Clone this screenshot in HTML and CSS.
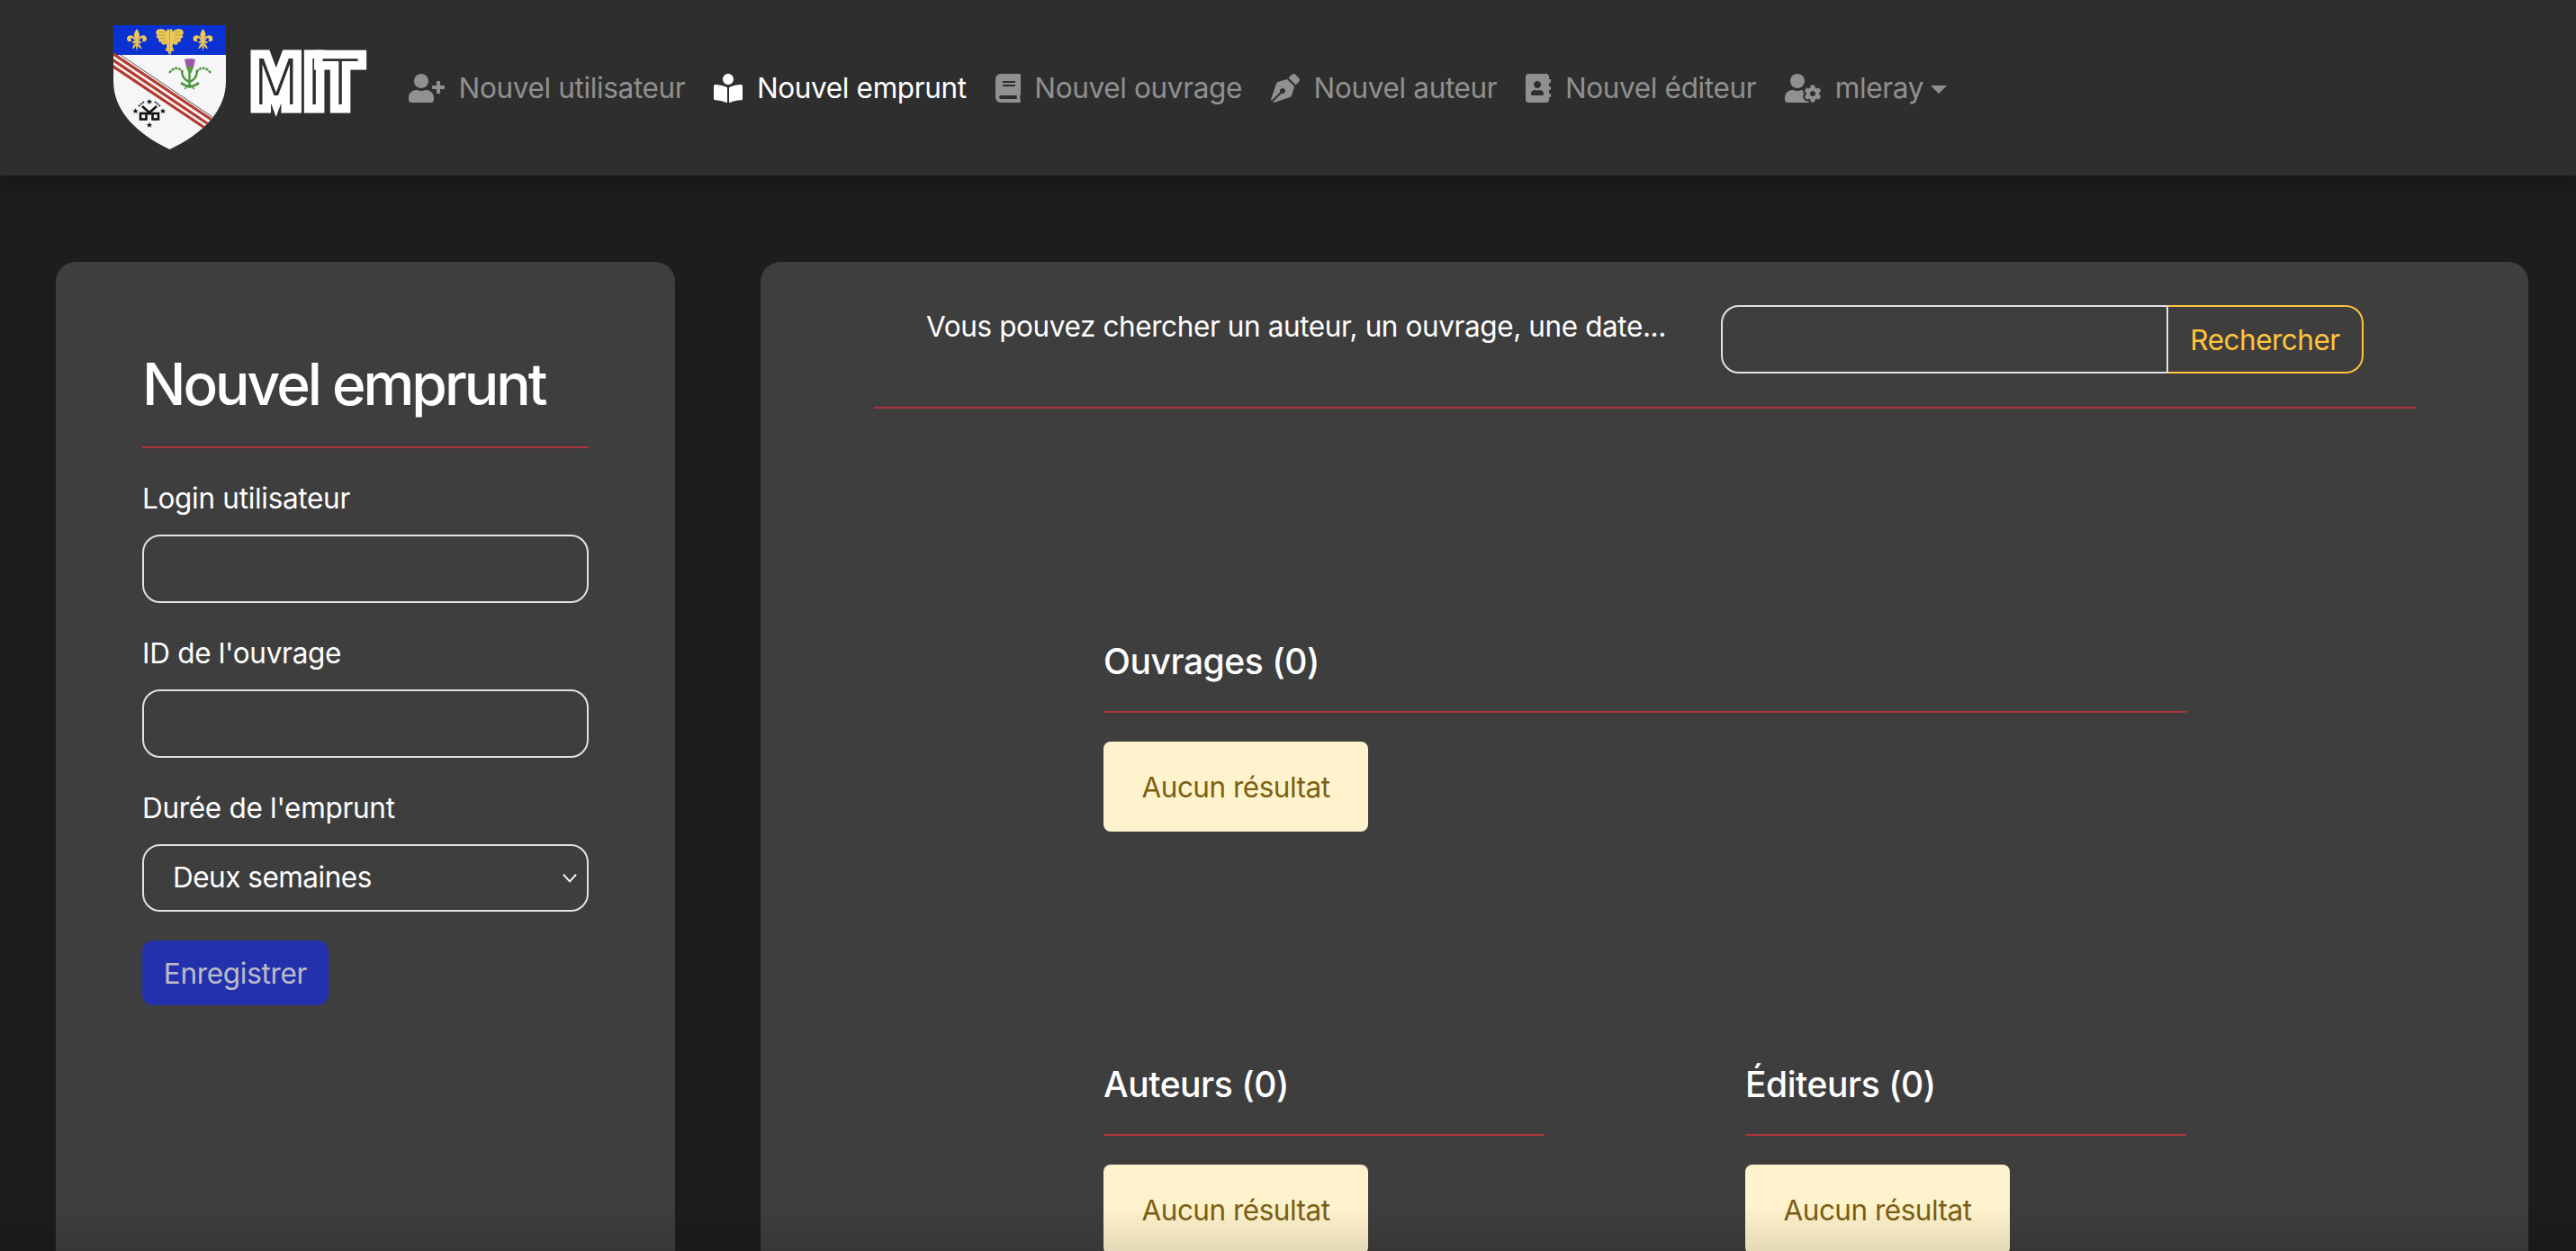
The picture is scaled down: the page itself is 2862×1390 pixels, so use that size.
FILE: index.html
```html
<!DOCTYPE html>
<html lang="fr">
<head>
    <meta charset="UTF-8">
    <meta name="viewport" content="width=device-width, initial-scale=1.0">
    <title>Nouvel emprunt</title>
    <link rel="stylesheet" href="styles.css">
</head>
<body>
    <svg class="defs" width="0" height="0" aria-hidden="true">
        <defs>
            <g id="fleur">
                <path d="M0-12.500C-3.500-8-3.800-4.500-1.600-1L-1.600 1.500H1.600L1.600-1C3.800-4.500 3.500-8 0-12.500Z"/>
                <path d="M-2.200-2C-4.500-7-11-6-11-1.500C-11 1.500-7.500 2.800-5.800 1C-6.800 .2-7-1.800-5.600-2.300C-4.300-2.600-3.300-1-2.500 1.500H-1Z"/>
                <path d="M2.200-2C4.500-7 11-6 11-1.500C11 1.500 7.500 2.800 5.800 1C6.800 .2 7-1.800 5.600-2.300C4.300-2.600 3.300-1 2.500 1.500H1Z"/>
                <path d="M-5 1.500H5V3.400H-5Z"/>
                <path d="M-1.700 3.400H1.700L0 12.500Z"/>
                <path d="M-2.500 3.400L-5.500 9.500C-3 9.500-1.700 7.500-1.100 5.500Z"/>
                <path d="M2.500 3.400L5.500 9.500C3 9.500 1.700 7.500 1.100 5.500Z"/>
            </g>
            <g id="wing">
                <path d="M0 5L2.500 4L3.500 7L6 5L10 4L14 5L15.500 8L14 11.500L15 13L12 15.500L12.500 18L9 19L9 21L6 22L4 20L3 24L5 28L2 29L1 32L0 33Z"/>
                <path d="M5 8L12 7M5 11L13 11M5 14L11 15M4 17L8 19" stroke="#9a8232" stroke-width=".6" fill="none"/>
            </g>
            <polygon id="star" points="0,-3.200 .9,-1 3.200,-1 1.400,.4 2,2.700 0,1.300 -2,2.700 -1.400,.4 -3.200,-1 -.9,-1"/>
        </defs>
    </svg>

    <nav class="navbar">
        <a class="brand" href="#">
            <svg class="shield" viewBox="0 0 125 138" width="125" height="138">
                <clipPath id="shieldClip">
                    <path d="M0 0H125V62C125 95 100 120 62.500 138C25 120 0 95 0 62Z"/>
                </clipPath>
                <g clip-path="url(#shieldClip)">
                    <rect width="125" height="138" fill="#f6f6f8"/>
                    <rect width="125" height="33" fill="#0a31d2"/>
                    <g stroke="#b53a2e" stroke-width="3.200" fill="none">
                        <path d="M-6 35L110 113"/>
                        <path d="M-6 42L106 117"/>
                        <path d="M-6 28L112 107"/>
                    </g>
                    <path d="M8 33L110 102" stroke="#555" stroke-width="1" fill="none"/>
                </g>
                <g fill="#ebc85a">
                    <use href="#fleur" x="26" y="16.500"/>
                    <use href="#fleur" x="99.500" y="16.500"/>
                    <use href="#wing" x="62.500" y="0"/>
                    <use href="#wing" transform="translate(62.500 0) scale(-1 1)"/>
                </g>
                <g fill="none" stroke="#4a9536" stroke-width="2.400">
                    <path d="M84.500 48V70M75 64Q85 72 95 64M76 50Q76 60 84.500 63M93 50Q93 60 84.500 63"/>
                    <path d="M62 53Q70 43 77 52M108 53Q100 43 92 52" stroke-dasharray="3 1"/>
                    <path d="M79 71L84.500 66L90 71" stroke-width="1.500"/>
                </g>
                <path d="M79 38C80 37 90 37 91 38L89 47H81Z" fill="#9a5aa8"/>
                <path d="M80.500 46H89.500L86.500 53H83.500Z" fill="#5b9a3f"/>
                <g fill="#111">
                    <use href="#star" x="40" y="85"/>
                    <use href="#star" x="24.500" y="95.500"/>
                    <use href="#star" x="55" y="95.500"/>
                    <use href="#star" x="40" y="111"/>
                </g>
                <g fill="none" stroke="#111" stroke-width="2.600">
                    <path d="M32 90L42 99M48 90L38 99"/>
                    <rect x="30" y="98" width="6.500" height="6.500"/>
                    <rect x="43.500" y="98" width="6.500" height="6.500"/>
                </g>
                <g fill="none" stroke="#333" stroke-width="2" stroke-dasharray="2 1">
                    <path d="M28 90L34 85M52 90L46 85"/>
                </g>
            </svg>
            <svg class="wordmark" viewBox="0 -8 126 84" width="126" height="84">
                <text x="-1 61 79" y="58">MIT</text>
            </svg>
        </a>
        <ul class="nav-list">
            <li><a class="nav-link" href="#">
                <svg class="nav-icon" viewBox="0 0 640 512" width="40" height="32"><path d="M624 208h-64v-64c0-8.800-7.200-16-16-16h-32c-8.800 0-16 7.200-16 16v64h-64c-8.800 0-16 7.200-16 16v32c0 8.800 7.200 16 16 16h64v64c0 8.800 7.200 16 16 16h32c8.800 0 16-7.200 16-16v-64h64c8.800 0 16-7.200 16-16v-32c0-8.800-7.200-16-16-16zm-400 48c70.700 0 128-57.300 128-128S294.700 0 224 0 96 57.300 96 128s57.300 128 128 128zm89.600 32h-16.700c-22.200 10.200-46.900 16-72.900 16s-50.600-5.800-72.900-16h-16.700C60.200 288 0 348.200 0 422.400V464c0 26.500 21.500 48 48 48h352c26.500 0 48-21.500 48-48v-41.600c0-74.200-60.200-134.400-134.400-134.400z"/></svg>
                Nouvel utilisateur</a></li>
            <li><a class="nav-link active" href="#">
                <svg class="nav-icon" viewBox="0 0 512 512" width="32" height="32"><path d="M352 96c0-53.020-42.980-96-96-96s-96 42.980-96 96 42.980 96 96 96 96-42.980 96-96zM233.590 241.100c-59.330-36.320-155.430-46.300-203.790-49.050C13.550 191.130 0 203.510 0 219.140v222.800c0 14.330 11.590 26.280 26.490 27.050 43.660 2.290 131.990 10.680 193.040 41.430 9.370 4.720 20.480-1.710 20.480-12.010V252.560c-.010-4.730-2.290-9.070-6.420-11.460zm248.610-49.050c-48.350 2.740-144.460 12.730-203.780 49.050-4.130 2.530-6.410 7.060-6.410 11.790v245.790c0 10.330 11.140 16.770 20.530 12.040 61.040-30.720 149.320-39.110 192.970-41.400 14.900-.780 26.490-12.730 26.490-27.060V219.140c-.010-15.630-13.560-28.010-29.800-27.090z"/></svg>
                Nouvel emprunt</a></li>
            <li><a class="nav-link" href="#">
                <svg class="nav-icon" viewBox="0 0 448 512" width="28" height="32"><path d="M448 360V24c0-13.300-10.700-24-24-24H96C43 0 0 43 0 96v320c0 53 43 96 96 96h328c13.300 0 24-10.700 24-24v-16c0-7.500-3.500-14.300-8.900-18.700-4.200-15.400-4.200-59.300 0-74.700 5.400-4.300 8.900-11.100 8.900-18.600zM128 134c0-3.300 2.700-6 6-6h212c3.300 0 6 2.700 6 6v20c0 3.300-2.700 6-6 6H134c-3.300 0-6-2.700-6-6v-20zm0 64c0-3.300 2.700-6 6-6h212c3.300 0 6 2.700 6 6v20c0 3.300-2.700 6-6 6H134c-3.300 0-6-2.700-6-6v-20zm253.400 250H96c-17.700 0-32-14.300-32-32 0-17.600 14.400-32 32-32h285.400c-1.900 17.100-1.900 46.900 0 64z"/></svg>
                Nouvel ouvrage</a></li>
            <li><a class="nav-link" href="#">
                <svg class="nav-icon" viewBox="0 0 512 512" width="32" height="32"><path d="M136.600 138.790a64.003 64.003 0 0 0-43.310 41.350L0 460l14.690 14.690L164.800 324.580c-2.990-6.260-4.800-13.180-4.800-20.580 0-26.510 21.490-48 48-48s48 21.490 48 48-21.490 48-48 48c-7.400 0-14.320-1.810-20.580-4.800L37.310 497.310 52 512l279.860-93.290a64.003 64.003 0 0 0 41.350-43.310L416 224 288 96l-151.400 42.790zm361.340-64.620l-60.110-60.110c-18.750-18.750-49.160-18.750-67.910 0l-56.550 56.550 128.020 128.020 56.550-56.550c18.750-18.750 18.750-49.150 0-67.910z"/></svg>
                Nouvel auteur</a></li>
            <li><a class="nav-link" href="#">
                <svg class="nav-icon" viewBox="0 0 448 512" width="28" height="32"><path d="M436 160c6.600 0 12-5.400 12-12v-40c0-6.600-5.400-12-12-12h-20V48c0-26.500-21.500-48-48-48H48C21.500 0 0 21.500 0 48v416c0 26.500 21.500 48 48 48h320c26.500 0 48-21.500 48-48v-48h20c6.600 0 12-5.400 12-12v-40c0-6.600-5.400-12-12-12h-20v-64h20c6.600 0 12-5.400 12-12v-40c0-6.600-5.400-12-12-12h-20v-64h20zm-228-32c35.300 0 64 28.700 64 64s-28.700 64-64 64-64-28.700-64-64 28.700-64 64-64zm112 236.800c0 10.600-10 19.200-22.400 19.200H118.400C106 384 96 375.400 96 364.800v-19.200c0-31.800 30.100-57.600 67.200-57.600h5c12.300 5.100 25.700 8 39.800 8s27.600-2.900 39.800-8h5c37.100 0 67.200 25.800 67.200 57.600v19.200z"/></svg>
                Nouvel éditeur</a></li>
            <li><a class="nav-link" href="#">
                <svg class="nav-icon" viewBox="0 0 640 512" width="40" height="32"><path d="M610.500 373.300c2.600-14.100 2.600-28.500 0-42.600l25.800-14.900c3-1.700 4.300-5.200 3.300-8.500-6.700-21.600-18.200-41.200-33.200-57.400-2.300-2.500-6-3.100-9-1.400l-25.800 14.900c-10.900-9.300-23.400-16.500-36.900-21.300v-29.800c0-3.400-2.400-6.400-5.700-7.100-22.300-5-45-4.800-66.200 0-3.300.700-5.700 3.700-5.700 7.100v29.800c-13.500 4.800-26 12-36.900 21.300l-25.800-14.900c-2.900-1.700-6.700-1.100-9 1.400-15 16.200-26.500 35.800-33.200 57.400-1 3.300.400 6.800 3.300 8.500l25.800 14.900c-2.600 14.100-2.600 28.500 0 42.600l-25.800 14.900c-3 1.700-4.300 5.200-3.300 8.500 6.700 21.600 18.200 41.100 33.200 57.400 2.300 2.500 6 3.100 9 1.400l25.800-14.900c10.900 9.300 23.400 16.500 36.900 21.300v29.800c0 3.400 2.400 6.400 5.700 7.100 22.300 5 45 4.800 66.200 0 3.300-.700 5.700-3.700 5.700-7.100v-29.800c13.500-4.800 26-12 36.900-21.300l25.800 14.900c2.900 1.700 6.700 1.100 9-1.400 15-16.200 26.500-35.800 33.200-57.400 1-3.300-.400-6.800-3.300-8.500l-25.800-14.900zM496 400.500c-26.800 0-48.500-21.800-48.500-48.500s21.800-48.500 48.500-48.500 48.500 21.800 48.500 48.500-21.700 48.500-48.500 48.500zM224 256c70.700 0 128-57.300 128-128S294.700 0 224 0 96 57.300 96 128s57.300 128 128 128zm201.200 226.500c-2.300-1.200-4.600-2.600-6.800-3.900l-7.900 4.600c-6 3.400-12.800 5.300-19.600 5.300-10.900 0-21.400-4.600-28.900-12.600-18.300-19.800-32.300-43.900-40.200-69.600-5.500-17.700 1.900-36.400 17.900-45.700l7.900-4.600c-.100-2.600-.100-5.200 0-7.800l-7.900-4.600c-16-9.200-23.400-28-17.900-45.700.900-2.900 2.200-5.800 3.200-8.700-3.800-.300-7.500-1.200-11.400-1.200h-16.700c-22.200 10.200-46.900 16-72.900 16s-50.600-5.800-72.900-16h-16.700C60.200 288 0 348.200 0 422.400V464c0 26.500 21.500 48 48 48h352c10.100 0 19.500-3.200 27.200-8.500-1.200-3.800-2-7.700-2-11.800v-9.200z"/></svg>
                mleray<span class="caret"></span></a></li>
        </ul>
    </nav>

    <main class="page">
        <section class="card form-card">
            <h2 class="form-title">Nouvel emprunt</h2>
            <hr class="rule">
            <form>
                <div class="field">
                    <label for="login">Login utilisateur</label>
                    <input class="control" type="text" id="login">
                </div>
                <div class="field">
                    <label for="ouvrage">ID de l'ouvrage</label>
                    <input class="control" type="text" id="ouvrage">
                </div>
                <div class="field">
                    <label for="duree">Durée de l'emprunt</label>
                    <select class="control select" id="duree">
                        <option>Deux semaines</option>
                    </select>
                </div>
                <button class="save-btn" type="button">Enregistrer</button>
            </form>
        </section>

        <section class="card results-card">
            <div class="search-row">
                <p class="search-hint">Vous pouvez chercher un auteur, un ouvrage, une date...</p>
                <div class="search-group">
                    <input class="search-input" type="text" aria-label="Recherche">
                    <button class="search-btn" type="button">Rechercher</button>
                </div>
            </div>
            <hr class="rule search-rule">

            <div class="results">
                <div class="result-block">
                    <h5>Ouvrages (0)</h5>
                    <hr class="rule">
                    <div class="alert">Aucun résultat</div>
                </div>
                <div class="result-pair">
                    <div class="result-block">
                        <h5>Auteurs (0)</h5>
                        <hr class="rule">
                        <div class="alert">Aucun résultat</div>
                    </div>
                    <div class="result-block">
                        <h5>Éditeurs (0)</h5>
                        <hr class="rule">
                        <div class="alert">Aucun résultat</div>
                    </div>
                </div>
            </div>
        </section>
    </main>
    <div class="bottom-fade"></div>
</body>
</html>
```

FILE: styles.css
```css
* {
    box-sizing: border-box;
}
html, body {
    height: 100%;
    overflow: hidden;
}
body {
    margin: 0;
    background-color: #1d1d1d;
    color: #fff;
    font-family: Inter, "Noto Sans", sans-serif;
    font-size: 31.5px;
    letter-spacing: -0.3px;
    line-height: 48px;
}
.defs {
    position: absolute;
}

/* navbar */
.navbar {
    display: flex;
    align-items: center;
    height: 195px;
    padding-left: 126px;
    background-color: #2e2e2e;
    box-shadow: 0 8px 24px rgba(0, 0, 0, 0.28);
    position: relative;
}
.brand {
    display: flex;
    align-items: center;
    gap: 27px;
    margin-top: -2px;
    text-decoration: none;
}
.shield {
    display: block;
}
.wordmark {
    display: block;
    margin-top: -10px;
    overflow: visible;
}
.wordmark text {
    font-family: "DejaVu Sans ExtraLight", "DejaVu Sans", sans-serif;
    font-weight: 200;
    font-size: 69px;
    letter-spacing: 0;
    fill: #2e2e2e;
    stroke: #fff;
    stroke-width: 19px;
    stroke-linejoin: miter;
    paint-order: stroke;
}
.nav-list {
    display: flex;
    list-style: none;
    margin: 0 0 0 34px;
    padding: 0;
}
.nav-link {
    display: flex;
    align-items: center;
    gap: 15.500px;
    padding: 0 16px;
    color: #909090;
    letter-spacing: -0.35px;
    text-decoration: none;
}
.nav-link.active {
    color: #fff;
}
.nav-icon {
    fill: currentColor;
    display: block;
}
.caret {
    margin-left: -8px;
    margin-top: 3px;
    border-top: 9.600px solid currentColor;
    border-left: 9.600px solid transparent;
    border-right: 9.600px solid transparent;
}

/* layout */
.page {
    display: flex;
    align-items: flex-start;
    gap: 95px;
    padding: 96px 53px 0 62px;
}
.card {
    background-color: #3e3e3e;
    border-radius: 22px 22px 0 0;
    height: 1200px;
}
.form-card {
    flex: 0 0 688px;
    padding: 96px;
}
.results-card {
    flex: 1;
    padding: 48px 125px 0 126px;
}
.rule {
    margin: 32px 0;
    border: 0;
    height: 2px;
    background-color: #ae343c;
}

/* left form */
.form-title {
    margin: 2px 0 -2px;
    font-size: 64px;
    font-weight: 500;
    letter-spacing: -3px;
    line-height: 76.800px;
}
.field {
    margin-bottom: 32px;
}
.field label {
    display: block;
    margin-bottom: 16px;
}
.control {
    display: block;
    width: 100%;
    height: 76px;
    padding: 0 32px;
    background-color: transparent;
    border: 2px solid #dee2e6;
    border-radius: 20px;
    color: #fff;
    font: inherit;
    letter-spacing: -0.5px;
}
.select {
    height: 75px;
    appearance: none;
    background-image: url("data:image/svg+xml,%3Csvg xmlns='http://www.w3.org/2000/svg' viewBox='0 0 14 10'%3E%3Cpath d='M1.500 2L7 8L12.500 2' fill='none' stroke='%23fff' stroke-width='1.500'/%3E%3C/svg%3E");
    background-repeat: no-repeat;
    background-position: right 10px center;
    background-size: 18px 13px;
}
.save-btn {
    display: block;
    width: 207px;
    height: 72px;
    padding: 2px 0 0;
    background-color: #2431ac;
    border: 0;
    border-radius: 12px;
    color: #bcbcc8;
    font: inherit;
    letter-spacing: -0.3px;
}

/* search */
.search-row {
    display: flex;
    align-items: flex-start;
    padding-left: 58px;
}
.search-hint {
    flex: 0 0 883px;
    margin: 0;
    letter-spacing: -0.4px;
}
.search-group {
    display: flex;
    width: 714px;
    height: 76px;
}
.search-input {
    flex: 1;
    background-color: transparent;
    border: 2px solid #dee2e6;
    border-radius: 20px 0 0 20px;
}
.search-btn {
    flex: 0 0 219px;
    margin-left: -2px;
    padding: 1px 0 0;
    background-color: transparent;
    border: 2px solid #ffc53d;
    border-left-color: #dee2e6;
    border-radius: 0 20px 20px 0;
    color: #ffc53d;
    font: inherit;
    letter-spacing: -0.5px;
}
.search-rule {
    margin: 37px 0 0;
}

/* results */
.results {
    width: 1203px;
    margin: 0 auto;
}
.result-block {
    padding-top: 256px;
}
.result-block h5 {
    margin: 0;
    padding-top: 1px;
    height: 48px;
    font-size: 39px;
    font-weight: 500;
    letter-spacing: -0.450px;
    line-height: 48px;
}
.result-pair {
    display: flex;
    justify-content: space-between;
}
.result-pair .result-block {
    width: 490px;
}
.alert {
    display: block;
    height: 100px;
    width: 294px;
    background-color: #fff3cd;
    border-radius: 8px;
    color: #7d5f12;
    letter-spacing: -0.5px;
    line-height: 102px;
    text-align: center;
}

/* darkening strip at the very bottom of the window */
.bottom-fade {
    position: fixed;
    left: 0;
    right: 0;
    bottom: 0;
    height: 50px;
    background: linear-gradient(to bottom, rgba(0, 0, 0, 0), rgba(0, 0, 0, 0.1));
}
```
